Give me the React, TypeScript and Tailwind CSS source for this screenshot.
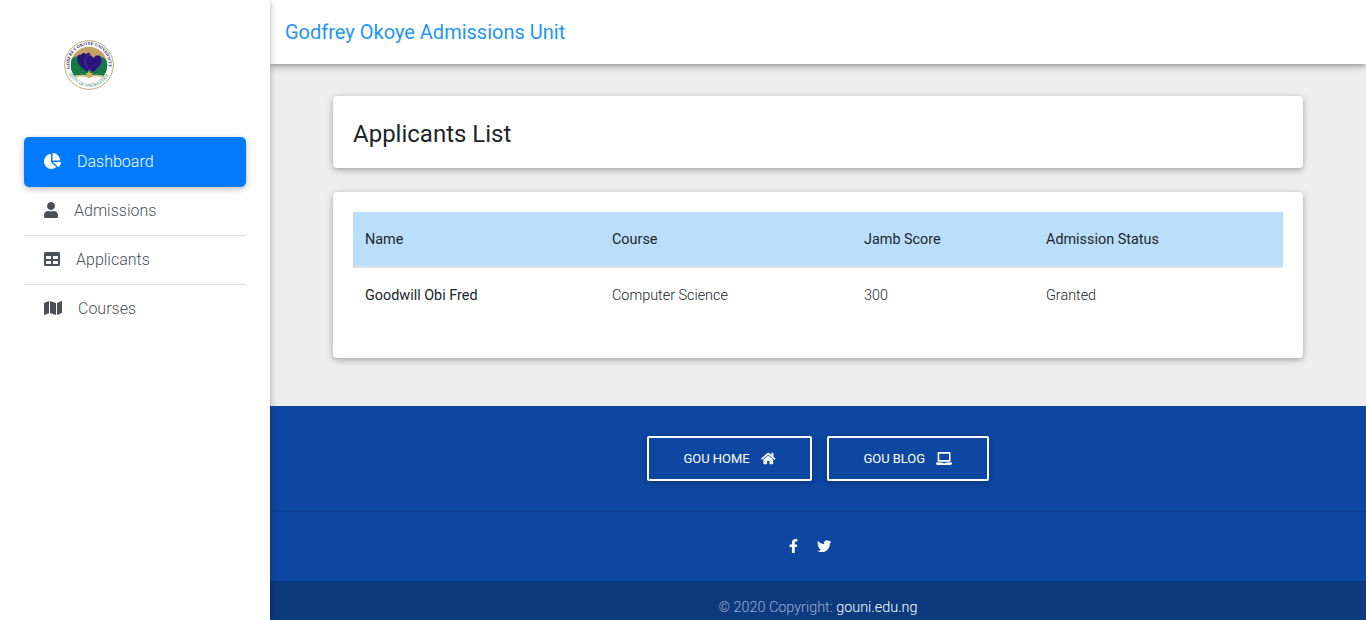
import {
  FaChartPie,
  FaFacebookF,
  FaHome,
  FaLaptop,
  FaMap,
  FaTable,
  FaTwitter,
  FaUser,
} from "react-icons/fa";

const cardShadow =
  "shadow-[0_2px_5px_0_rgba(0,0,0,0.2),0_2px_10px_0_rgba(0,0,0,0.14)]";

function Crest() {
  return (
    <svg viewBox="0 0 100 100" className="block size-[50px]">
      <defs>
        <clipPath id="crest-inner">
          <circle cx="50" cy="50" r="36.5" />
        </clipPath>
        <path id="crest-top" d="M11.5 58 A39.5 39.5 0 1 1 88.5 58" />
        <path id="crest-bottom" d="M7 59 A44 44 0 0 0 93 59" />
      </defs>
      <circle cx="50" cy="50" r="48.7" fill="#fff" stroke="#bfa873" strokeWidth="2" />
      <g clipPath="url(#crest-inner)">
        <rect x="10" y="10" width="80" height="80" fill="#c3a263" />
        <path d="M10 80 V44 Q20 30 30 34 L50 60 L70 34 Q82 32 90 48 V80 Z" fill="#147a45" />
        <path d="M10 77 Q30 65 50 72 Q70 65 90 77 V92 H10 Z" fill="#fff" />
      </g>
      <path d="M22 74 Q38 68 50 75 Q62 68 78 74" fill="none" stroke="#c9ac62" strokeWidth="2.5" />
      <path
        d="M47 63 C37 58 27 49 27 39 C25 34 28 28 34 30 C36 24 43 25 44 29 C48 22 55 27 53 33 L57 38 C56 50 53 59 47 63 Z"
        fill="#2b1479"
      />
      <path
        d="M58 65 C48 58 41 50 42 39 C43 29 54 28 59 36 C63 28 76 29 76 40 C76 50 66 59 58 65 Z"
        fill="#2b1479"
        stroke="#5a5f9e"
        strokeWidth="1.2"
      />
      <path d="M43 66 H48 L50 60 L52 66 H58 Q56 70 51 71 L54 74 H46 L49 71 Q45 70 43 66 Z" fill="#dcb94a" />
      <text
        fontSize="8.5"
        fontWeight="700"
        fill="#27215f"
        fontFamily="Liberation Serif, serif"
      >
        <textPath href="#crest-top" textLength="138" lengthAdjust="spacingAndGlyphs">
          GODFREY OKOYE UNIVERSITY
        </textPath>
      </text>
      <text fontSize="8.5" fontWeight="400" fill="#3d8c7a" fontFamily="Liberation Sans, sans-serif">
        <textPath href="#crest-bottom" startOffset="8" textLength="101" lengthAdjust="spacingAndGlyphs">
          UNITY OF KNOWLEDGE
        </textPath>
      </text>
    </svg>
  );
}

function Sidebar() {
  return (
    <aside className={`${cardShadow} relative z-10 w-[270px] shrink-0 bg-white px-6`}>
      <div className="px-10 pt-10 pb-[47px]">
        <Crest />
      </div>
      <nav className="text-base leading-6 font-light text-[#495057]">
        <a className="flex h-[50px] items-center gap-4 rounded-[5px] bg-[#007bff] px-5 pb-px text-white shadow-[0_2px_5px_0_rgba(0,0,0,0.16),0_2px_10px_0_rgba(0,0,0,0.12)]">
          <FaChartPie className="mb-px h-4 w-[17px]" />
          Dashboard
        </a>
        <a className="flex h-[49px] items-center gap-4 border-b border-[#dfdfdf] px-5">
          <FaUser className="mb-[2px] h-4 w-[14px]" />
          Admissions
        </a>
        <a className="flex h-[49px] items-center gap-4 border-b border-[#dfdfdf] px-5">
          <FaTable className="mb-[2px] size-4" />
          Applicants
        </a>
        <a className="flex h-[49px] items-center gap-4 px-5 pb-px">
          <FaMap className="mb-[2px] h-4 w-[18px]" />
          Courses
        </a>
      </nav>
    </aside>
  );
}

function ApplicantsTable() {
  return (
    <table className="w-full table-fixed border-separate border-spacing-0 text-left text-[14.4px] leading-[21.6px]">
      <colgroup>
        <col className="w-[247px]" />
        <col className="w-[252px]" />
        <col className="w-[182px]" />
        <col className="w-[249px]" />
      </colgroup>
      <thead>
        <tr className="h-14 bg-[#bbdefb]">
          <th className="border-b-2 border-[#dee2e6] px-3 pt-[2px] font-normal">Name</th>
          <th className="border-b-2 border-[#dee2e6] px-3 pt-[2px] font-normal">Course</th>
          <th className="border-b-2 border-[#dee2e6] px-3 pt-[2px] font-normal">Jamb Score</th>
          <th className="border-b-2 border-[#dee2e6] px-3 pt-[2px] font-normal">Admission Status</th>
        </tr>
      </thead>
      <tbody>
        <tr className="h-[54px]">
          <th className="px-3 pt-[2px] font-normal">Goodwill Obi Fred</th>
          <td className="px-3 pt-[2px]">Computer Science</td>
          <td className="px-3 pt-[2px]">300</td>
          <td className="px-3 pt-[2px]">Granted</td>
        </tr>
      </tbody>
    </table>
  );
}

function Footer() {
  return (
    <footer className="flex flex-1 flex-col bg-[#0e47a1] text-white">
      <div className="flex h-[105px] justify-center gap-[15px] pt-[30px] text-[12.96px] font-normal">
        <a className="flex h-[45px] w-[165px] items-center justify-between rounded-[2px] border-2 border-white pr-[34.4px] pl-[34.4px] shadow-[0_2px_5px_0_rgba(0,0,0,0.16),0_2px_10px_0_rgba(0,0,0,0.12)]">
          GOU HOME
          <FaHome className="h-[13px] w-[14.6px]" />
        </a>
        <a className="flex h-[45px] w-[162px] items-center justify-between rounded-[2px] border-2 border-white pr-[34.8px] pl-[34.4px] shadow-[0_2px_5px_0_rgba(0,0,0,0.16),0_2px_10px_0_rgba(0,0,0,0.12)]">
          GOU BLOG
          <FaLaptop className="h-[13px] w-[16.2px]" />
        </a>
      </div>
      <div className="flex h-[70px] justify-center gap-[19.5px] border-t border-black/10 pt-[26.5px] pr-[15.8px]">
        <FaFacebookF className="h-[14.4px] w-[9px]" />
        <FaTwitter className="size-[14.4px]" />
      </div>
      <div className="flex-1 bg-[#0d397f] pt-4 text-center text-[14.4px] leading-[21.6px] text-white/60">
        © 2020 Copyright: <a className="text-white">gouni.edu.ng</a>
      </div>
    </footer>
  );
}

export default function App() {
  return (
    <div className="flex h-[620px] w-full overflow-hidden bg-[#eeeeee] font-[Roboto,sans-serif] font-light text-[#212529]">
      <Sidebar />
      <div className="flex min-w-0 flex-1 flex-col">
        <header className="relative flex h-16 shrink-0 items-center bg-white px-[15px] text-xl font-normal text-[#2196f3] shadow-[0_2px_5px_0_rgba(0,0,0,0.26),0_2px_10px_0_rgba(0,0,0,0.16)]">
          Godfrey Okoye Admissions Unit
        </header>
        <main className="flex h-[342px] shrink-0 flex-col gap-6 px-[63px] pt-8">
          <section className={`${cardShadow} flex h-[72px] items-center rounded-[4px] bg-white px-5 pt-1`}>
            <h1 className="text-2xl font-normal">Applicants List</h1>
          </section>
          <section className={`${cardShadow} h-[166px] rounded-[4px] bg-white p-5`}>
            <ApplicantsTable />
          </section>
        </main>
        <Footer />
      </div>
    </div>
  );
}
